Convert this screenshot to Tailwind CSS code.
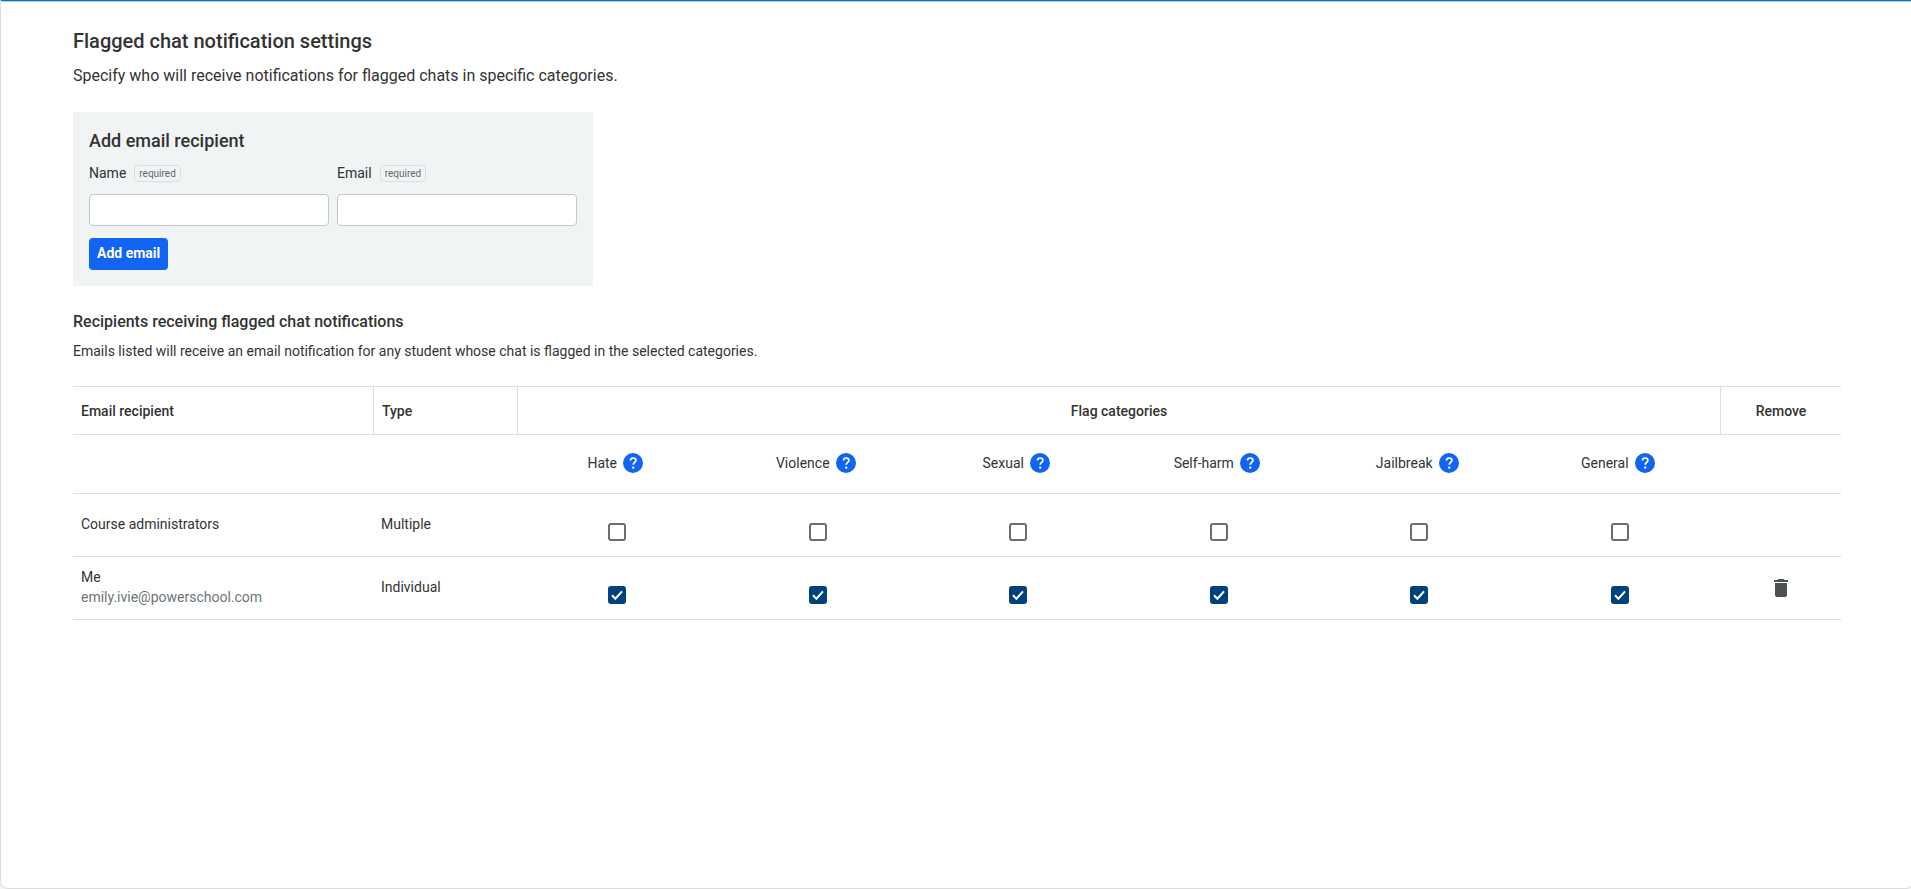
<!DOCTYPE html>
<html lang="en">
<head>
    <meta charset="UTF-8">
    <meta name="viewport" content="width=device-width, initial-scale=1.0">
    <title>Flagged chat notification settings</title>
    <script src="https://cdn.jsdelivr.net/npm/@tailwindcss/browser@4"></script>
</head>
<body class="bg-[#f5f5f5] font-[Roboto,sans-serif] text-sm text-[#333] overflow-hidden">
    <main class="min-h-screen -mr-[3px] bg-white border-x border-b border-[#dcdcdc] rounded-b-lg">
        <div class="h-0.5 bg-[#0077b5] border-b border-[#b4d4e2]"></div>
        <div class="px-18 pt-6">
            <h1 class="text-xl leading-[30px] font-medium">Flagged chat notification settings</h1>
            <p class="text-base leading-6 mt-2">Specify who will receive notifications for flagged chats in specific categories.</p>

            <!-- Add recipient form -->
            <form class="w-130 max-w-full mt-6 bg-[#f0f4f5] p-4">
                <h2 class="text-lg leading-[26px] font-medium">Add email recipient</h2>
                <div class="flex gap-2 mt-2">
                    <div class="flex-1">
                        <div class="flex items-center gap-2 h-5.5 mb-2.5">
                            <label for="name">Name</label>
                            <span class="text-[10px] leading-[15px] px-1 border border-[#dadfdf] rounded text-[#606a6d]">required</span>
                        </div>
                        <input id="name" type="text" required class="block w-full h-8 px-2 bg-white border border-[#c1c7c9] rounded">
                    </div>
                    <div class="flex-1">
                        <div class="flex items-center gap-2 h-5.5 mb-2.5">
                            <label for="email">Email</label>
                            <span class="text-[10px] leading-[15px] px-1 border border-[#dadfdf] rounded text-[#606a6d]">required</span>
                        </div>
                        <input id="email" type="email" required class="block w-full h-8 px-2 bg-white border border-[#c1c7c9] rounded">
                    </div>
                </div>
                <button type="button" class="block h-8 px-2 pb-0.5 mt-3 bg-[#1264f3] text-white font-bold rounded">Add email</button>
            </form>

            <h2 class="text-base leading-6 font-medium mt-6">Recipients receiving flagged chat notifications</h2>
            <p class="leading-[18px] mt-2">Emails listed will receive an email notification for any student whose chat is flagged in the selected categories.</p>

            <table class="w-full table-fixed border-separate border-spacing-0 mt-6.5 border-t border-[#dbe0e0] leading-5 text-left">
                <colgroup>
                    <col class="w-75">
                    <col class="w-36">
                    <col><col><col><col><col><col>
                    <col class="w-[121px]">
                </colgroup>
                <thead>
                    <tr class="h-12 *:border-b *:border-[#dbe0e0]">
                        <th class="px-2 font-medium">Email recipient</th>
                        <th class="px-2 font-medium border-l">Type</th>
                        <th colspan="6" class="px-2 font-medium text-center border-l">Flag categories</th>
                        <th class="px-2 font-medium text-center border-l">Remove</th>
                    </tr>
                    <tr id="categories" class="h-[59px] *:border-b *:border-[#dbe0e0]">
                        <td></td>
                        <td></td>
                    </tr>
                </thead>
                <tbody id="recipients"></tbody>
            </table>
        </div>
    </main>

    <script>
        const categories = ["Hate", "Violence", "Sexual", "Self-harm", "Jailbreak", "General"];
        const recipients = [
            { name: "Course administrators", email: "", type: "Multiple", checked: false, removable: false },
            { name: "Me", email: "emily.ivie@powerschool.com", type: "Individual", checked: true, removable: true }
        ];

        const helpIcon = `<svg class="block size-5" viewBox="0 0 20 20" aria-hidden="true">
            <circle cx="10" cy="10" r="10" fill="#1264f3"/>
            <path d="M7.5 7.6C7.5 5.9 8.6 5 10.2 5s2.7.9 2.7 2.4c0 1.9-2.7 2.1-2.7 4.3" fill="none" stroke="#fff" stroke-width="1.7"/>
            <circle cx="10.2" cy="14.6" r="1.2" fill="#fff"/>
        </svg>`;
        const trashIcon = `<svg class="w-3.5 h-[18px]" viewBox="0 0 14 18" fill="#4a5254" aria-hidden="true">
            <path d="M0 1h3.5l1-1h5l1 1H14v2H0zM1 4h12v12a2 2 0 0 1-2 2H3a2 2 0 0 1-2-2z"/>
        </svg>`;

        const categoryRow = document.getElementById("categories");
        categories.forEach(category => {
            categoryRow.insertAdjacentHTML("beforeend", `
                <th scope="col" class="font-normal">
                    <div class="flex items-center justify-center gap-1.5 pr-1 pb-0.5">
                        ${category}
                        <button type="button" aria-label="About ${category}">${helpIcon}</button>
                    </div>
                </th>`);
        });
        categoryRow.insertAdjacentHTML("beforeend", "<td></td>");

        const checkbox = (recipient, category) => `
            <td class="pt-3.5">
                <label class="relative block size-[18px] mx-auto">
                    <input type="checkbox" aria-label="${category} for ${recipient.name}" ${recipient.checked ? "checked" : ""}
                        class="peer block size-[18px] appearance-none bg-white border-2 border-[#667073] rounded-[3px] checked:bg-[#00427c] checked:border-[#00427c]">
                    <svg class="absolute inset-0 hidden peer-checked:block pointer-events-none" viewBox="0 0 18 18" fill="none" stroke="#fff" stroke-width="2">
                        <path d="M4 9.3 7.4 12.7 14 5.3"/>
                    </svg>
                </label>
            </td>`;

        const body = document.getElementById("recipients");
        recipients.forEach(recipient => {
            body.insertAdjacentHTML("beforeend", `
                <tr class="h-[63px] *:border-b *:border-[#dbe0e0]">
                    <td class="px-2 pb-0.5">
                        ${recipient.name}
                        ${recipient.email ? `<div class="text-[#6c757a]">${recipient.email}</div>` : ""}
                    </td>
                    <td class="px-2 pb-0.5">${recipient.type}</td>
                    ${categories.map(category => checkbox(recipient, category)).join("")}
                    <td class="text-center">
                        ${recipient.removable ? `<button type="button" class="block mx-auto" aria-label="Remove ${recipient.name}">${trashIcon}</button>` : ""}
                    </td>
                </tr>`);
        });
    </script>
</body>
</html>
